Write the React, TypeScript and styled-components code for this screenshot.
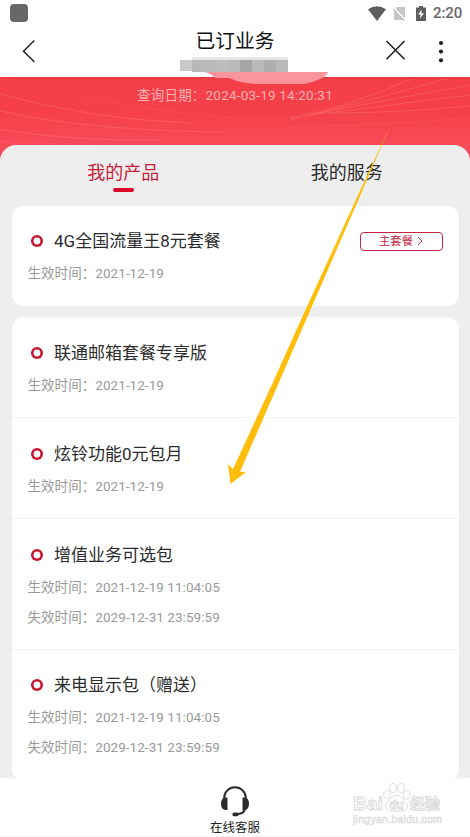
import React from 'react';
import styled, { createGlobalStyle } from 'styled-components';

const GlobalStyle = createGlobalStyle`
  * { box-sizing: border-box; }
  body { margin: 0; background: #fff; font-family: Roboto, "Noto Sans CJK SC", sans-serif; }
`;

const Screen = styled.main`
  position: relative;
  width: 470px;
  height: 837px;
  overflow: hidden;
  display: flex;
  flex-direction: column;
  background: #fff;
`;

const StatusBar = styled.div`
  height: 26px;
  flex: none;
  display: flex;
  align-items: center;
  justify-content: space-between;
  padding: 0 8px 0 10px;
  svg { display: block; }
`;

const AppDot = styled.div`
  width: 18px;
  height: 18px;
  border-radius: 4px;
  background: #686868;
  margin-top: -1px;
`;

const StatusIcons = styled.div`
  display: flex;
  align-items: center;
  color: #5e5e5e;
`;

const SimIcon = styled.svg`
  margin: 0 10px 0 7px;
`;

const Clock = styled.span`
  margin-left: 7px;
  width: 29px;
  font-size: 15px;
  line-height: 26px;
  letter-spacing: -0.1px;
  font-weight: 500;
  color: #686868;
`;

const Header = styled.header`
  height: 51px;
  flex: none;
  display: grid;
  grid-template-columns: 120px 1fr 120px;
`;

const HeaderSide = styled.div<{ $end?: boolean }>`
  display: flex;
  justify-content: ${p => (p.$end ? 'flex-end' : 'flex-start')};
  padding: ${p => (p.$end ? '13px 24px 0 0' : '13px 0 0 21px')};
  gap: 30px;
`;

const Title = styled.h1`
  margin: 0;
  padding-top: 1px;
  text-align: center;
  font-size: 19.8px;
  font-weight: 400;
  line-height: 30px;
  color: #111;
`;

const Hero = styled.section`
  position: relative;
  flex: none;
  height: 85px;
  background: linear-gradient(#e23640 0, #f43e48 2px, #f54049 35px, #f84b59 68px);
`;

const HeroLines = styled.svg`
  position: absolute;
  inset: 0;
`;

const QueryDate = styled.div`
  position: relative;
  text-align: center;
  padding-top: 8px;
  font-size: 13.5px;
  line-height: 20px;
  letter-spacing: 0.2px;
  color: #fbb0b4;
`;

const Panel = styled.section`
  position: relative;
  margin-top: -17px;
  height: 633px;
  flex: none;
  overflow: hidden;
  border-radius: 16px 16px 0 0;
  background: #eee;
  padding: 0 11.5px;
`;

const Tabs = styled.nav`
  height: 61px;
  display: grid;
  grid-template-columns: 1fr 1fr;
`;

const Tab = styled.div<{ $active?: boolean }>`
  display: flex;
  flex-direction: column;
  align-items: center;
  padding-top: 14px;
  font-size: 18px;
  line-height: 28px;
  color: ${p => (p.$active ? '#c51c38' : '#2b2b2b')};
  &::after {
    content: '';
    width: 21px;
    height: 4px;
    margin-top: 1px;
    border-radius: 2px;
    background: ${p => (p.$active ? '#dd0727' : 'transparent')};
  }
`;

const Card = styled.div`
  border-radius: 12px;
  background: #fff;
  margin-bottom: 11px;
`;

const Item = styled.article<{ $tall?: boolean }>`
  height: ${p => (p.$tall ? '131px' : '101px')};
  padding: 22px 16px 0;
  &:not(:last-child) { border-bottom: 1px solid #f2f2f2; }
  &:last-child { padding-top: 21px; }
  &:only-child { height: 100px; }
`;

const ItemHead = styled.div`
  display: flex;
  align-items: center;
  height: 28px;
`;

const Ring = styled.span`
  width: 12px;
  height: 12px;
  margin: 0 11.5px 0 3px;
  box-shadow: inset 0 0 0 2.6px #c5152f;
  border-radius: 50%;
`;

const ItemName = styled.h2`
  margin: 0;
  flex: 1;
  font-size: 17px;
  font-weight: 400;
  line-height: 28px;
  color: #2c2c2c;
`;

const MainPlan = styled.button`
  display: flex;
  align-items: center;
  justify-content: center;
  gap: 4px;
  width: 83px;
  height: 19px;
  padding: 0;
  border: 1.4px solid #c22741;
  border-radius: 4px;
  background: #fff;
  color: #c22741;
  font: 11.3px/17px Roboto, "Noto Sans CJK SC", sans-serif;
`;

const Period = styled.div`
  height: 30px;
  padding-top: 4px;
  font-size: 13.5px;
  line-height: 28px;
  letter-spacing: 0.05px;
  color: #999;
`;

const Footer = styled.footer`
  height: 59px;
  flex: none;
  display: flex;
  flex-direction: column;
  align-items: center;
  padding-top: 7px;
  border-top: 1px solid #fafafa;
  border-bottom: 1px solid #f4f4f4;
  background: #fff;
  svg { flex: none; }
`;

const FooterLabel = styled.span`
  font-size: 12.5px;
  line-height: 18px;
  margin-top: 1px;
  color: #222;
`;

const Overlay = styled.svg`
  position: absolute;
  inset: 0;
  pointer-events: none;
`;

const SMUDGE = ['#c9c9c9', '#b8b8b8', '#b9b9b9', '#bdbdbd', '#b9b9b9', '#a5a5a5', '#bababa', '#aeaeae', '#b9b9b9'];

type Entry = { name: string; start: string; end?: string };

const extras: Entry[] = [
  { name: '联通邮箱套餐专享版', start: '2021-12-19' },
  { name: '炫铃功能0元包月', start: '2021-12-19' },
  { name: '增值业务可选包', start: '2021-12-19 11:04:05', end: '2029-12-31 23:59:59' },
  { name: '来电显示包（赠送）', start: '2021-12-19 11:04:05', end: '2029-12-31 23:59:59' },
];

function Product({ entry, main }: { entry: Entry; main?: boolean }) {
  return (
    <Item $tall={!!entry.end}>
      <ItemHead>
        <Ring />
        <ItemName>{entry.name}</ItemName>
        {main && (
          <MainPlan>
            主套餐
            <svg width="6" height="10" viewBox="0 0 6 10" fill="none" stroke="#c22741">
              <path d="M1 1l4 4-4 4" />
            </svg>
          </MainPlan>
        )}
      </ItemHead>
      <Period>生效时间：{entry.start}</Period>
      {entry.end && <Period>失效时间：{entry.end}</Period>}
    </Item>
  );
}

export default function App() {
  return (
    <Screen>
      <GlobalStyle />
      <StatusBar>
        <AppDot />
        <StatusIcons>
          <svg width="18" height="15" viewBox="0 0 18 15" fill="currentColor">
            <path d="M0 3.2Q9-2.8 18 3.2L9 15z" />
          </svg>
          <SimIcon width="13" height="15" viewBox="0 0 13 15">
            <path d="M4 1h8v13H1V4z" fill="#c6c6c6" />
            <path d="M0 1.5l12.5 13" stroke="#fff" strokeWidth="2" />
            <path d="M0 2.5l11.5 12" stroke="#aaa" strokeWidth="1" />
          </SimIcon>
          <svg width="10" height="15" viewBox="0 0 10 15" fill="currentColor">
            <path d="M3 0h4v1.5h3V15H0V1.5h3z" />
            <path d="M5.7 3.5L2 8.5h2.6L4 12.5l4-5.3H5.3z" fill="#fff" />
          </svg>
          <Clock>2:20</Clock>
        </StatusIcons>
      </StatusBar>

      <Header>
        <HeaderSide>
          <svg width="15" height="24" viewBox="0 0 15 24" fill="none" stroke="#222" strokeWidth="1.5">
            <path d="M13.3 1.5L2.5 12.3l10.8 10.5" />
          </svg>
        </HeaderSide>
        <Title>已订业务</Title>
        <HeaderSide $end>
          <svg width="21" height="24" viewBox="0 0 21 24" fill="none" stroke="#222" strokeWidth="1.6">
            <path d="M1.5 2l18 18.3M19.5 2l-18 18.3" />
          </svg>
          <svg width="10" height="26" viewBox="0 0 10 26" fill="#222">
            <circle cx="5" cy="4" r="2.1" />
            <circle cx="5" cy="12.6" r="2.1" />
            <circle cx="5" cy="21.3" r="2.1" />
          </svg>
        </HeaderSide>
      </Header>

      <Hero>
        <HeroLines width="470" height="85" fill="none" stroke="#ff9b9f" strokeOpacity="0.36" strokeWidth="0.7">
          <path d="M0 1Q85 24 175 35T300 40" strokeOpacity="0.15" />
          <path d="M0 17Q90 42 190 46" />
          <path d="M0 34Q90 54 225 55" />
          <path d="M0 52Q65 64 160 63" />
          <path d="M0 64Q55 68 90 68" strokeOpacity="0.2" />
          <path d="M290 41Q350 30 410 2" />
          <path d="M290 43Q370 24 445 2" />
          <path d="M310 38Q380 24 470 8" />
          <path d="M320 37Q390 28 470 18" />
          <path d="M330 36Q400 36 470 29" />
          <path d="M290 50Q390 48 470 41" strokeOpacity="0.2" />
        </HeroLines>
        <QueryDate>查询日期：2024-03-19 14:20:31</QueryDate>
      </Hero>

      <Panel>
        <Tabs>
          <Tab $active>我的产品</Tab>
          <Tab>我的服务</Tab>
        </Tabs>
        <Card>
          <Product main entry={{ name: '4G全国流量王8元套餐', start: '2021-12-19' }} />
        </Card>
        <Card>
          {extras.map(entry => (
            <Product key={entry.name} entry={entry} />
          ))}
        </Card>
      </Panel>

      <Footer>
        <svg width="30" height="32" viewBox="0 0 30 32" fill="none" stroke="#2b2b2d" strokeWidth="2">
          <path d="M4.200 14V12a10.800 10.800 0 0 1 21.600 0V14" />
          <path d="M25 23q-1 5-9 5.300" />
          <g fill="#2b2b2d" stroke="none">
            <path d="M7.500 11.500v12.500H5.500Q1 23.500 1 17.800T5.500 11.500z" />
            <path d="M22.500 11.500v12.500h2Q29 23.500 29 17.800T24.500 11.500z" />
            <rect x="12.500" y="26.500" width="6" height="3.800" rx="1.500" />
          </g>
        </svg>
        <FooterLabel>在线客服</FooterLabel>
      </Footer>

      <Overlay width="470" height="837" viewBox="0 0 470 837">
        <path d="M205 72h123q-1 4-8 7-8 4-16 5h-47q-18-1-28-6h-14q-3-4-10-6z" fill="#f9959b" />
        <rect x="192" y="57" width="96" height="3" fill="#e6e6e6" />
        {SMUDGE.map((fill, i) => (
          <rect key={i} x={180 + i * 12} y="60" width="12" height={i === 0 ? 11 : 12} fill={fill} />
        ))}
        <path d="M390.500 125L358.300 200 306 320 280 380 240 471.800 246 472 230.500 484 228 464 233 469 274 380 300.800 320 355.800 200z" fill="#ffbd0c" />
        <g fill="#fff" stroke="#d9d9d9" strokeWidth="0.900" strokeLinejoin="round">
          <text x="353" y="810" fontSize="19" fontWeight="700" fontFamily="Liberation Sans" textLength="30">Bai</text>
          <ellipse cx="387" cy="794.500" rx="3.300" ry="4.300" />
          <ellipse cx="393" cy="788" rx="3.300" ry="4.500" />
          <ellipse cx="401" cy="788" rx="3.300" ry="4.500" />
          <ellipse cx="406.500" cy="795" rx="3.300" ry="4.300" />
          <path d="M396.500 795q4 0 7 5 5 4 4 7-1 4-6 4h-11q-5-1-5-5 0-3 4-6 3-5 7-5z" />
          <text x="389" y="809" fontSize="12" fontWeight="700" fontFamily="Liberation Sans">du</text>
          <text x="410" y="809" fontSize="15" fontWeight="700" fontFamily="Noto Sans CJK SC">经验</text>
          <text x="353" y="823" fontSize="10.500" strokeWidth="0.600" fontFamily="Liberation Sans" textLength="89">jingyan.baidu.com</text>
        </g>
      </Overlay>
    </Screen>
  );
}
